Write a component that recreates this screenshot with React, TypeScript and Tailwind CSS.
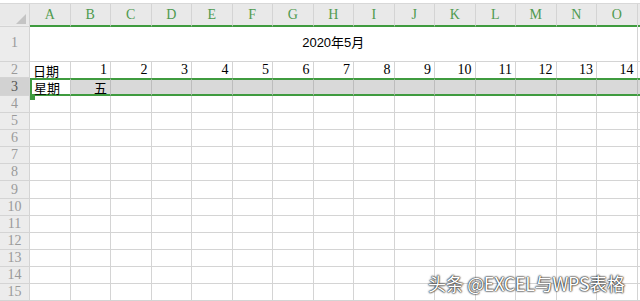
import * as React from "react";

const COLS = ["A", "B", "C", "D", "E", "F", "G", "H", "I", "J", "K", "L", "M", "N", "O"];
const GRID = "grid grid-cols-[30px_repeat(15,40.5px)_1fr]";
const serif = "font-['Liberation_Serif','Noto_Sans_CJK_SC',serif]";
const cjk = "font-['Noto_Sans_CJK_SC','Liberation_Sans',sans-serif]";
const sel = "border-y-2 border-y-[#3f9b3f]";

function RowHead({ n, active }: { n: number; active?: boolean }) {
  return (
    <div
      className={`flex items-center justify-center overflow-hidden border-r border-b border-[#d4d4d4] text-[14px] leading-none ${serif} ${
        active ? "bg-[#d2d2d2] text-[#555]" : "bg-[#ececec] text-[#9a9a9a]"
      }`}
    >
      {n}
    </div>
  );
}

export default function App() {
  const blankRows = Array.from({ length: 12 }, (_, i) => i + 4);

  return (
    <div className="relative h-[301px] w-[640px] overflow-hidden bg-white">
      {/* toolbar remnant */}
      <div className="h-[4px] border-b border-[#d8d8d8] bg-white" />

      {/* column headers */}
      <div className={`${GRID} h-[21px] bg-[#e9e9e9]`}>
        <div className="relative border-r border-b border-[#d4d4d4]">
          <div className="absolute right-[3px] bottom-[2px] h-0 w-0 border-b-[10px] border-l-[10px] border-b-[#c4c4c4] border-l-transparent" />
        </div>
        {COLS.map((c) => (
          <div
            key={c}
            className={`flex items-center justify-center border-r border-b-2 border-r-[#d4d4d4] border-b-[#3f9b3f] text-[14px] text-[#4f9a4f] ${serif}`}
          >
            {c}
          </div>
        ))}
        <div className="border-b-2 border-[#3f9b3f]" />
      </div>

      {/* row 1 */}
      <div className={`${GRID} h-[37px]`}>
        <RowHead n={1} />
        <div className="col-span-15 flex items-center justify-center border-b border-r border-[#d4d4d4] font-['Liberation_Sans','Noto_Sans_CJK_SC',sans-serif] text-[13px] text-black">
          2020年5月
        </div>
        <div className="border-b border-[#d4d4d4]" />
      </div>

      {/* row 2 */}
      <div className={`${GRID} h-[16px]`}>
        <RowHead n={2} />
        <div className={`flex items-end border-r border-[#d4d4d4] pl-[3px] text-[13px] leading-[15px] text-black ${cjk}`}>
          日期
        </div>
        {COLS.slice(1).map((_, i) => (
          <div
            key={i}
            className={`flex items-end justify-end border-r border-[#d4d4d4] pr-[3px] text-[14px] leading-[16px] text-black ${serif}`}
          >
            {i + 1}
          </div>
        ))}
        <div />
      </div>

      {/* row 3 (selected) */}
      <div className={`${GRID} relative h-[18px]`}>
        <RowHead n={3} active />
        <div className={`flex items-center border-l-2 border-r ${sel} border-l-[#3f9b3f] border-r-[#c8c8c8] bg-white pl-[2px] text-[13px] leading-none text-black ${cjk}`}>
          星期
        </div>
        <div className={`flex items-center justify-end border-r ${sel} border-r-[#bdbdbd] bg-[#d9d9d9] pr-[3px] text-[13px] leading-none text-black ${cjk}`}>
          五
        </div>
        {COLS.slice(2).map((c) => (
          <div key={c} className={`border-r ${sel} border-r-[#bdbdbd] bg-[#d9d9d9]`} />
        ))}
        <div className={`${sel} bg-[#d9d9d9]`} />
        <div className="absolute left-[30px] bottom-[-4px] h-[5px] w-[5px] bg-[#3f9b3f]" />
      </div>

      {/* blank rows */}
      {blankRows.map((n) => (
        <div key={n} className={`${GRID} h-[17.1px]`}>
          <RowHead n={n} />
          {COLS.map((c) => (
            <div key={c} className="border-r border-b border-[#d4d4d4]" />
          ))}
          <div className="border-b border-[#d4d4d4]" />
        </div>
      ))}

      {/* watermark */}
      <div className={`absolute left-[428px] top-[270px] text-[18px] tracking-[-0.3px] text-white [text-shadow:0_0_1px_#222,0_0_2px_#222,0_0_2px_#444] ${cjk}`}>
        头条 @EXCEL与WPS表格
      </div>
    </div>
  );
}
